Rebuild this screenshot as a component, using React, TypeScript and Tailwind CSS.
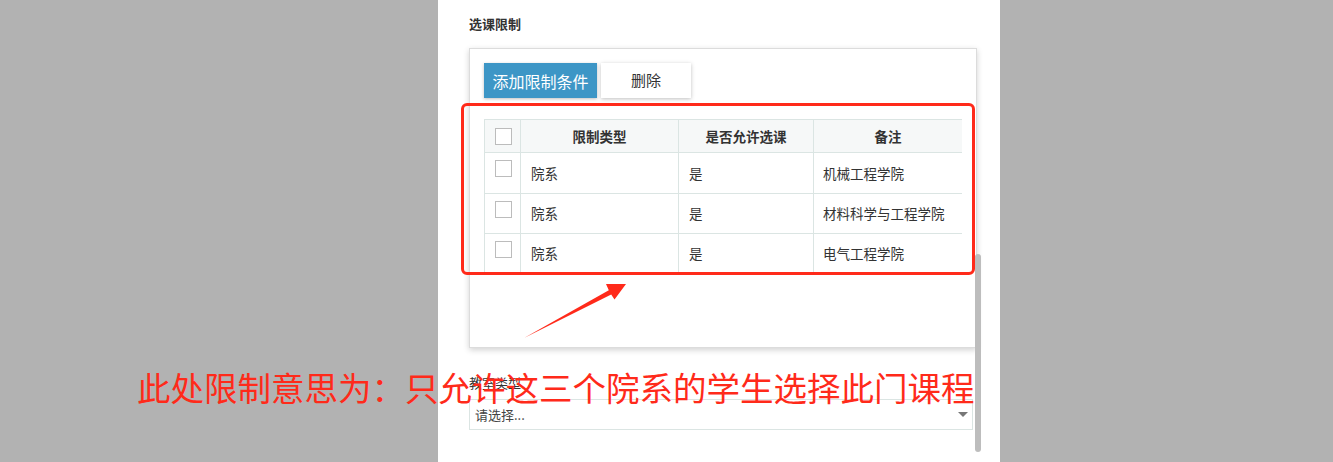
const cjk = { fontFamily: '"Noto Sans CJK SC", "Noto Sans", sans-serif' };

const rows = [
  { type: "院系", allow: "是", note: "机械工程学院", h: "h-[41px]" },
  { type: "院系", allow: "是", note: "材料科学与工程学院", h: "h-[40px]" },
  { type: "院系", allow: "是", note: "电气工程学院", h: "h-[40px]" },
];

function Box() {
  return <div className="h-[17px] w-[17px] border border-[#bcbcbc] bg-white" />;
}

export default function App() {
  return (
    <div className="relative h-[462px] w-[1333px] overflow-hidden bg-[#b2b2b2]" style={cjk}>
      <div className="ml-[438px] flex h-[462px] w-[562px] bg-white pl-[31px]">
        <div className="w-[506px]">
          <div className="mt-[17px] h-[14px] text-[13px] leading-[14px] font-bold text-[#333]">选课限制</div>

          <div className="mt-[17px] h-[300px] w-[508px] border border-[#dcdcdc] bg-white px-[14px] pt-[14px] shadow-[0_2px_6px_rgba(0,0,0,0.18)]">
            <div className="flex gap-[4px]">
              <button className="h-[35px] w-[113px] bg-[#3d96c6] text-[16px] text-white shadow-[0_1px_3px_rgba(0,0,0,0.25)]">
                添加限制条件
              </button>
              <button className="h-[35px] w-[90px] bg-white text-[15px] text-[#333] shadow-[0_1px_4px_rgba(0,0,0,0.25)]">
                删除
              </button>
            </div>

            <div className="mt-[21px] h-[154px] w-[478px] overflow-hidden">
              <table className="w-[478px] table-fixed border-collapse text-[13.5px] text-[#333]">
                <colgroup>
                  <col className="w-[36px]" />
                  <col className="w-[158px]" />
                  <col className="w-[135px]" />
                  <col className="w-[149px]" />
                </colgroup>
                <thead>
                  <tr className="h-[33px] bg-[#f6f8f8]">
                    <th className="border border-[#dbe5e3] px-[10px] align-middle">
                      <Box />
                    </th>
                    <th className="border border-[#dbe5e3] font-bold">限制类型</th>
                    <th className="border border-[#dbe5e3] font-bold">是否允许选课</th>
                    <th className="border border-[#dbe5e3] font-bold">备注</th>
                  </tr>
                </thead>
                <tbody>
                  {rows.map((r, i) => (
                    <tr key={i} className={r.h}>
                      <td className="border border-[#dbe5e3] px-[10px] pt-[7px] align-top">
                        <Box />
                      </td>
                      <td className="border border-[#dbe5e3] px-[10px]">{r.type}</td>
                      <td className="border border-[#dbe5e3] px-[10px]">{r.allow}</td>
                      <td className="border border-[#dbe5e3] px-[9px] whitespace-nowrap">{r.note}</td>
                    </tr>
                  ))}
                </tbody>
              </table>
            </div>
          </div>

          <div className="mt-[28px] h-[14px] text-[13px] leading-[14px] text-[#333]">教室类型</div>
          <div className="mt-[9px] flex h-[31px] w-[504px] items-center justify-between border border-[#dbe5e3] pl-[5px] pr-[4px] text-[13px] text-[#444]">
            <span>请选择...</span>
            <span className="h-0 w-0 border-x-[5px] border-t-[5px] border-x-transparent border-t-[#777]" />
          </div>
        </div>
        <div className="mt-[254px] h-[198px] w-[6px] rounded-full bg-[#bdbdbd]" />
      </div>

      {/* annotation overlay */}
      <div className="absolute left-[461px] top-[103px] h-[172px] w-[514px] rounded-[6px] border-[3px] border-[#ff2a1a]" />
      <svg className="absolute left-0 top-0" width="1333" height="462">
        <polygon
          points="524,338 608.8,290.2 606,284 626,284 614.5,299.5 611.2,294.6"
          fill="#ff2a1a"
        />
      </svg>
      <div className="absolute left-[137px] top-[367px] text-[33.5px] leading-[40px] whitespace-nowrap text-[#ff2a1a]">
        此处限制意思为：只允许这三个院系的学生选择此门课程
      </div>
    </div>
  );
}
